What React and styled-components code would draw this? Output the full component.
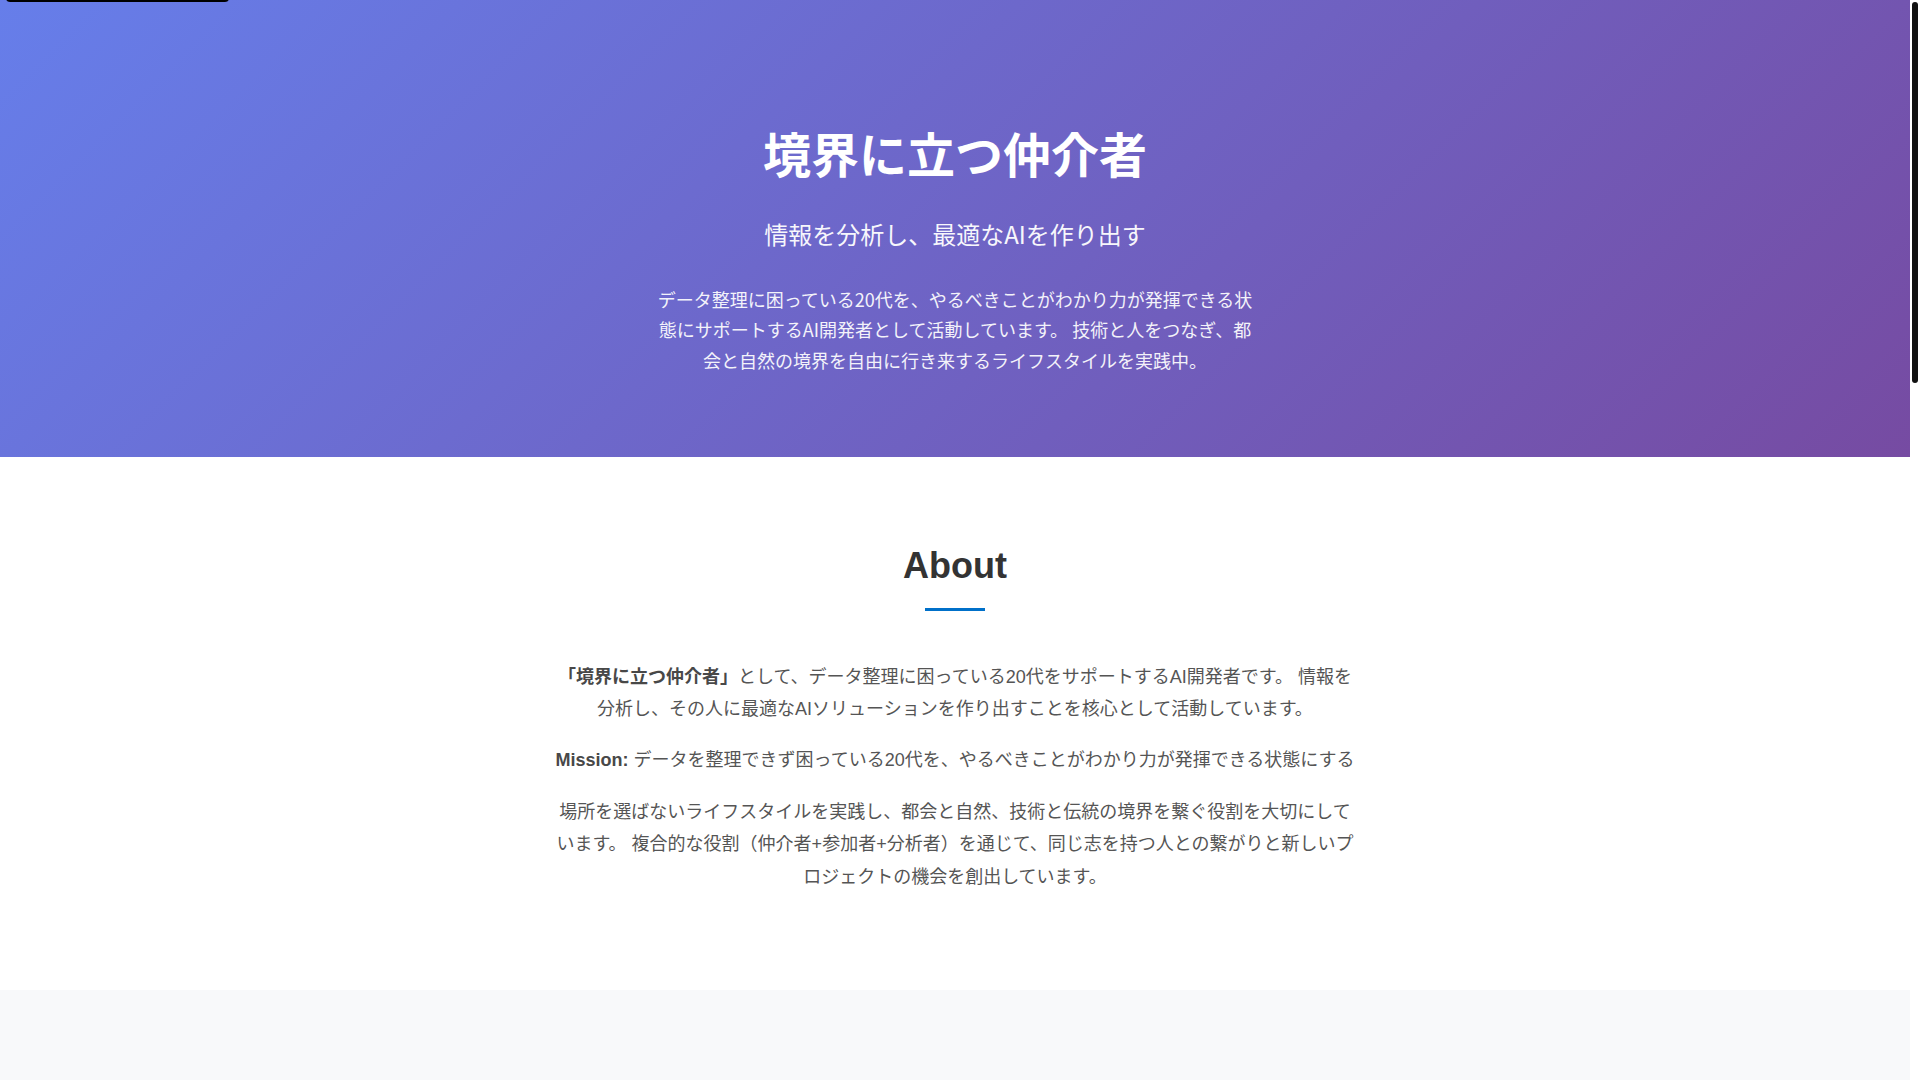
import React from 'react';
import styled, { createGlobalStyle } from 'styled-components';

const GlobalStyle = createGlobalStyle`
  html, body {
    margin: 0;
    padding: 0;
    background: #fff;
  }
  body {
    font-family: "Liberation Sans", "Noto Sans CJK JP", sans-serif;
    color: #555;
  }
  * { box-sizing: border-box; }
`;

// the page keeps a 10px strip on the right for the scrollbar
const Page = styled.div`
  margin-right: 10px;
`;

const ScrollTrack = styled.div`
  position: fixed;
  top: 0;
  right: 0;
  width: 10px;
  height: 100vh;
  background: #fff;
  z-index: 20;
`;

const ScrollThumb = styled.div`
  position: absolute;
  top: 2px;
  left: 2px;
  width: 6px;
  border-radius: 3px;
  background: #111;
`;

const SkipLink = styled.a`
  position: absolute;
  top: -38px;
  left: 6px;
  width: 223px;
  height: 40px;
  padding: 8px;
  border-radius: 4px;
  background: #000;
  color: #fff;
  font-size: 15px;
  line-height: 24px;
  white-space: nowrap;
  overflow: hidden;
  text-decoration: none;
  text-align: center;
  z-index: 10;
`;

const Hero = styled.header`
  padding: 124px 20px 82px;
  background: linear-gradient(135deg, #667eea 0%, #764ba2 100%);
  color: #fff;
  text-align: center;
  font-family: "Noto Sans CJK JP", "Liberation Sans", sans-serif;
`;

const HeroTitle = styled.h1`
  margin: 0 0 34px;
  font-size: 48px;
  font-weight: 700;
  line-height: 1.2;
`;

const HeroSubtitle = styled.p`
  margin: 0 0 32px;
  font-size: 24px;
  font-weight: 400;
  line-height: 1.5;
  opacity: 0.95;
`;

const HeroText = styled.p`
  max-width: 600px;
  margin: 0 auto;
  font-size: 18px;
  line-height: 1.7;
  opacity: 0.92;
`;

const Section = styled.section`
  padding: ${p => p.$pad || '87px 20px 78px'};
  background: ${p => p.$bg || '#fff'};
  min-height: ${p => p.$minHeight || 'auto'};
`;

const Container = styled.div`
  max-width: 806px;
  margin: 0 auto;
  text-align: center;
`;

const SectionTitle = styled.h2`
  margin: 0;
  font-size: 36px;
  font-weight: 700;
  line-height: 1.2;
  color: #333;
`;

const TitleBar = styled.div`
  width: 60px;
  height: 3px;
  margin: 20px auto 50px;
  background: #0070c9;
`;

const Paragraph = styled.p`
  margin: 0 0 19px;
  font-size: 18px;
  line-height: 1.8;
  color: #555;

  strong {
    color: #484848;
    font-weight: 700;
  }
`;

export default function App() {
  return (
    <Page>
      <GlobalStyle />
      <SkipLink href="#about">メインコンテンツへスキップ</SkipLink>
      <ScrollTrack>
        <ScrollThumb style={{ height: 381 }} />
      </ScrollTrack>

      <Hero>
        <HeroTitle>境界に立つ仲介者</HeroTitle>
        <HeroSubtitle>情報を分析し、最適なAIを作り出す</HeroSubtitle>
        <HeroText>
          データ整理に困っている20代を、やるべきことがわかり力が発揮できる状態にサポートするAI開発者として活動しています。 技術と人をつなぎ、都会と自然の境界を自由に行き来するライフスタイルを実践中。
        </HeroText>
      </Hero>

      <main>
        <Section id="about">
          <Container>
            <SectionTitle>About</SectionTitle>
            <TitleBar />
            <Paragraph>
              <strong>「境界に立つ仲介者」</strong>として、データ整理に困っている20代をサポートするAI開発者です。 情報を分析し、その人に最適なAIソリューションを作り出すことを核心として活動しています。
            </Paragraph>
            <Paragraph>
              <strong>Mission:</strong> データを整理できず困っている20代を、やるべきことがわかり力が発揮できる状態にする
            </Paragraph>
            <Paragraph>
              場所を選ばないライフスタイルを実践し、都会と自然、技術と伝統の境界を繋ぐ役割を大切にしています。 複合的な役割（仲介者+参加者+分析者）を通じて、同じ志を持つ人との繋がりと新しいプロジェクトの機会を創出しています。
            </Paragraph>
          </Container>
        </Section>

        <Section $bg="#f8f9fa" $pad="86px 20px 80px" $minHeight="2072px" />
      </main>
    </Page>
  );
}
